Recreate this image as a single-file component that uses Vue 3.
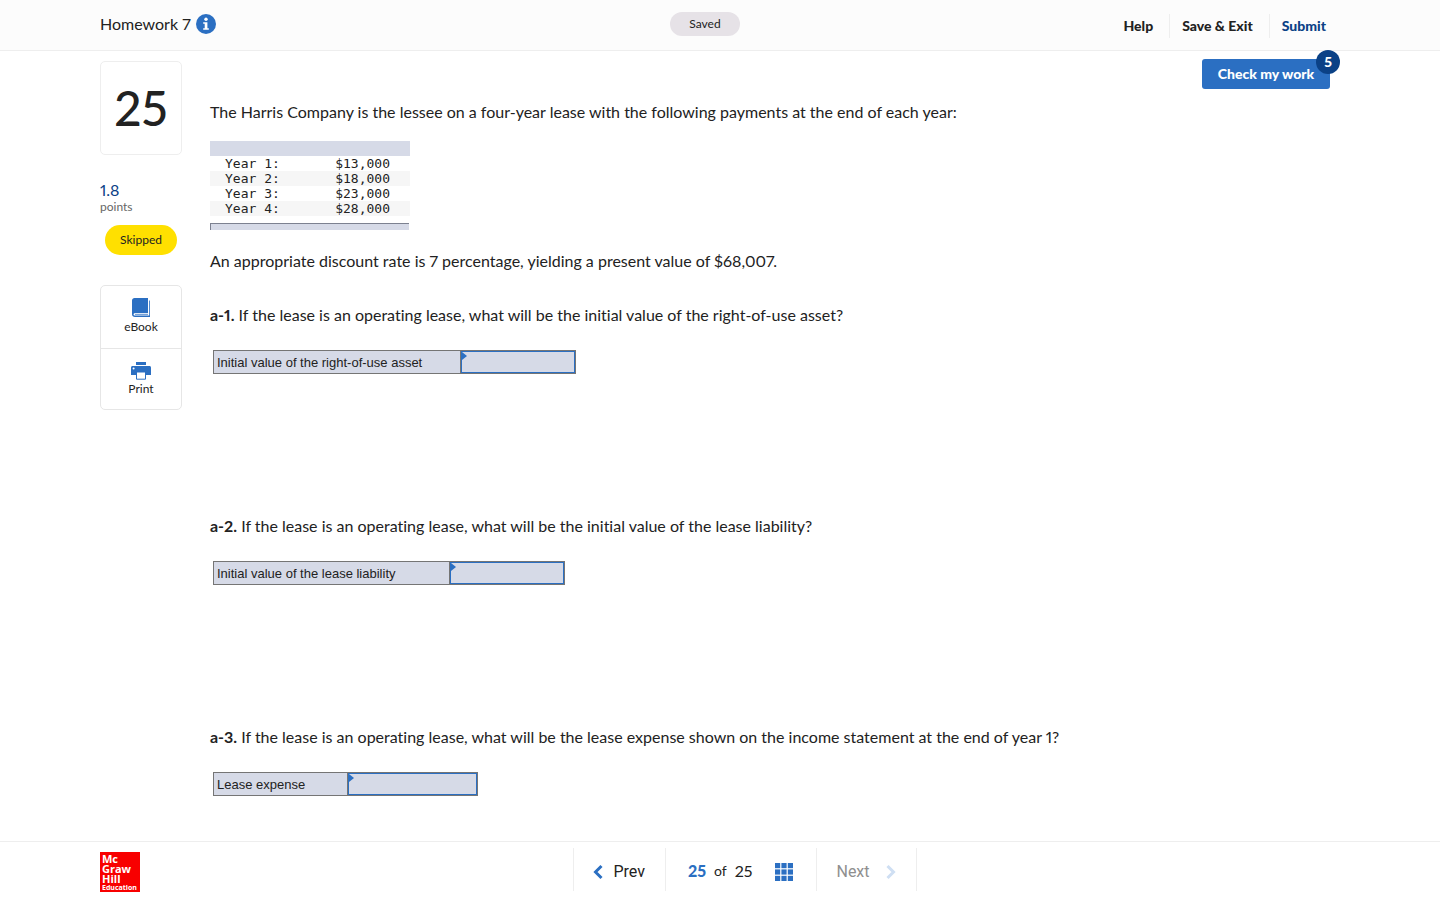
<template>
  <div class="page">
    <header class="topbar">
      <div class="title">
        <h1>Homework 7</h1>
        <button class="info-btn" aria-label="Assignment information">
          <svg width="20" height="20" viewBox="0 0 20 20">
            <circle cx="10" cy="10" r="10" fill="#2b6fc2" />
            <circle cx="10" cy="5.3" r="1.7" fill="#fff" />
            <path d="M7.2 8.2h4.2v6h1.4v1.6H7.2v-1.6h1.5V9.8H7.2z" fill="#fff" />
          </svg>
        </button>
      </div>
      <span class="saved">Saved</span>
      <nav class="top-nav">
        <a href="#">Help</a>
        <a href="#">Save &amp; Exit</a>
        <a href="#" class="submit">Submit</a>
      </nav>
    </header>

    <main class="main">
      <aside class="sidebar">
        <div class="number">{{ current }}</div>
        <div class="score">1.8</div>
        <div class="score-label">points</div>
        <span class="skipped">Skipped</span>
        <div class="tools">
          <button class="tool">
            <svg width="20" height="22" viewBox="0 0 20 22">
              <path d="M3.5 1H17v15H4.2c-1.2 0-1.6.8-1.6 1.4 0 .7.6 1.2 1.4 1.2h14.2V3.4h.8V20H4c-1.7 0-3-1.1-3-2.8V3.5C1 2.1 2.1 1 3.5 1z" fill="#2b6fc2" />
              <path d="M4 17.3h13" stroke="#2b6fc2" stroke-width="0.8" />
            </svg>
            <span>eBook</span>
          </button>
          <button class="tool">
            <svg width="20" height="22" viewBox="0 0 20 22">
              <path d="M5 3h10v3H5z" fill="#2b6fc2" />
              <path d="M1.5 7h17c.8 0 1.5.7 1.5 1.5V16H0V8.5C0 7.7.7 7 1.5 7z" fill="#2b6fc2" />
              <circle cx="2.6" cy="9.4" r="1" fill="#fff" />
              <path d="M5.5 13h9v7.2h-9z" fill="#fff" stroke="#2b6fc2" />
            </svg>
            <span>Print</span>
          </button>
        </div>
      </aside>

      <section class="content">
        <div class="actions">
          <button class="check-btn">Check my work<span class="badge">5</span></button>
        </div>
        <p>The Harris Company is the lessee on a four-year lease with the following payments at the end of each year:</p>

        <table class="payments">
          <thead>
            <tr><th colspan="2"></th></tr>
          </thead>
          <tbody>
            <tr v-for="row in payments" :key="row.year">
              <td>{{ row.year }}</td>
              <td class="amount">{{ row.amount }}</td>
            </tr>
          </tbody>
        </table>
        <div class="scrollbar"></div>

        <p class="rate">An appropriate discount rate is 7 percentage, yielding a present value of $68,007.</p>

        <div v-for="q in questions" :key="q.id" class="question">
          <p><b>{{ q.id }}.</b> {{ q.text }}</p>
          <table class="answer">
            <tbody>
              <tr>
                <th scope="row" :class="q.labelSize"><label :for="q.id">{{ q.label }}</label></th>
                <td :class="q.inputSize"><input :id="q.id" v-model="q.value" type="text"></td>
              </tr>
            </tbody>
          </table>
        </div>
      </section>
    </main>

    <footer class="footer">
      <div class="logo">
        <span>Mc</span>
        <span>Graw</span>
        <span>Hill</span>
        <span class="small">Education</span>
      </div>
      <nav class="pager">
        <button class="page-btn prev">
          <svg width="10" height="16" viewBox="0 0 10 16">
            <path d="M8.5 2l-6 6 6 6" fill="none" stroke="#2b6fc2" stroke-width="3" />
          </svg>
          Prev
        </button>
        <div class="position">
          <b>{{ current }}</b>
          <span class="of">of</span>
          <span>{{ total }}</span>
          <button class="grid-btn" aria-label="All questions">
            <svg width="18" height="18" viewBox="0 0 18 18">
              <template v-for="y in 3" :key="y">
                <rect v-for="x in 3" :key="x" :x="(x - 1) * 6.4" :y="(y - 1) * 6.4" width="5.2" height="5.2" fill="#2b6fc2" />
              </template>
            </svg>
          </button>
        </div>
        <button class="page-btn next" disabled>
          Next
          <svg width="10" height="16" viewBox="0 0 10 16">
            <path d="M1.5 2l6 6-6 6" fill="none" stroke="#cfdff3" stroke-width="3" />
          </svg>
        </button>
      </nav>
    </footer>
  </div>
</template>

<script setup>
import { ref } from 'vue';

const current = ref(25);
const total = 25;

const payments = [
  { year: 'Year 1:', amount: '$13,000' },
  { year: 'Year 2:', amount: '$18,000' },
  { year: 'Year 3:', amount: '$23,000' },
  { year: 'Year 4:', amount: '$28,000' },
];

const questions = ref([
  {
    id: 'a-1',
    text: 'If the lease is an operating lease, what will be the initial value of the right-of-use asset?',
    label: 'Initial value of the right-of-use asset',
    labelSize: 'label-lg',
    inputSize: 'input-md',
    value: '',
  },
  {
    id: 'a-2',
    text: 'If the lease is an operating lease, what will be the initial value of the lease liability?',
    label: 'Initial value of the lease liability',
    labelSize: 'label-md',
    inputSize: 'input-md',
    value: '',
  },
  {
    id: 'a-3',
    text: 'If the lease is an operating lease, what will be the lease expense shown on the income statement at the end of year 1?',
    label: 'Lease expense',
    labelSize: 'label-sm',
    inputSize: 'input-lg',
    value: '',
  },
]);
</script>

<style>
body {
  margin: 0;
  background: #fff;
}
</style>

<style scoped>
.page {
  display: flex;
  flex-direction: column;
  min-height: 100vh;
  font-family: Lato, 'Open Sans', sans-serif;
  font-size: 16px;
  font-variant-ligatures: none;
  font-variant-numeric: proportional-nums;
  line-height: 24px;
  color: #222;
}

button {
  padding: 0;
  border: none;
  background: none;
  font: inherit;
  color: inherit;
  cursor: pointer;
}

p {
  margin: 0;
}

/* header */
.topbar {
  display: grid;
  grid-template-columns: 1fr auto 1fr;
  align-items: center;
  height: 50px;
  padding: 0 114px 0 84px;
  background: #fcfcfc;
  border-bottom: 1px solid #eee;
}

.title {
  display: flex;
  align-items: center;
  gap: 5px;
  padding: 0 0 3px 16px;
}

.title h1 {
  margin: 0;
  font-size: 16px;
  font-weight: 400;
}

.info-btn {
  display: flex;
}

.saved {
  width: 70px;
  margin-bottom: 2px;
  border-radius: 12px;
  background: #e6e2e7;
  font-size: 12px;
  text-align: center;
}

.top-nav {
  display: flex;
  justify-content: flex-end;
  padding-top: 2px;
  font-size: 14px;
  font-weight: 900;
}

.top-nav a {
  padding: 0 16px 0 12px;
  color: #222;
  text-decoration: none;
}

.top-nav a + a {
  border-left: 1px solid #eee;
}

.top-nav .submit {
  padding-right: 0;
  color: #0b4186;
}

/* body */
.main {
  display: flex;
  flex: 1;
  gap: 28px;
  padding: 0 110px 0 100px;
}

.sidebar {
  width: 82px;
  padding-top: 10px;
}

.number {
  border: 1px solid #eee;
  border-radius: 5px;
  font-size: 48px;
  font-weight: 500;
  line-height: 92px;
  text-align: center;
}

.score {
  margin-top: 26px;
  line-height: 18px;
  color: #0b4186;
}

.score-label {
  font-size: 12px;
  line-height: 16px;
  color: #666;
}

.skipped {
  display: block;
  margin: 10px 5px 30px;
  border-radius: 15px;
  background: #ffe000;
  font-size: 12px;
  line-height: 30px;
  text-align: center;
}

.tools {
  border: 1px solid #e6e6e6;
  border-radius: 5px;
}

.tool {
  display: flex;
  flex-direction: column;
  align-items: center;
  width: 100%;
  height: 62px;
  padding-top: 11px;
  font-size: 12px;
  line-height: 16px;
}

.tool + .tool {
  height: 61px;
  padding-top: 10px;
  border-top: 1px solid #e6e6e6;
}

.content {
  flex: 1;
  min-width: 0;
  padding-top: 8px;
}

.actions {
  display: flex;
  justify-content: flex-end;
  margin-bottom: 11px;
}

.check-btn {
  position: relative;
  width: 128px;
  border-radius: 3px;
  background: #2b6fc2;
  color: #fff;
  font-size: 14px;
  font-weight: 900;
  line-height: 30px;
}

.badge {
  position: absolute;
  top: -9px;
  right: -10px;
  width: 24px;
  border-radius: 50%;
  background: #0b4186;
  line-height: 24px;
}

.payments {
  width: 200px;
  margin-top: 17px;
  border-collapse: collapse;
  font-family: 'DejaVu Sans Mono', monospace;
  font-size: 13px;
  line-height: 15px;
}

.payments th {
  height: 15px;
  padding: 0;
  background: #d6dae7;
}

.payments td {
  padding: 0 0 0 15px;
}

.payments .amount {
  padding: 0 20px 0 0;
  text-align: right;
}

.payments tbody tr:nth-child(even) {
  background: #f6f6f6;
}

.scrollbar {
  width: 198px;
  height: 6px;
  margin-top: 7px;
  border-top: 1px solid #7c8190;
  border-left: 1px solid #7c8190;
  background: #d6dae7;
}

.rate {
  margin: 19px 0 30px;
}

.question {
  min-height: 211px;
}

.question:last-child {
  min-height: 0;
  padding-bottom: 45px;
}

.answer {
  margin: 23px 0 0 3px;
  border-collapse: collapse;
  table-layout: fixed;
  background: #d6dae7;
  font-family: 'Liberation Sans', Arial, sans-serif;
  font-size: 13px;
  line-height: 20px;
}

.answer th,
.answer td {
  padding: 0;
  border: 1px solid #757575;
}

.answer th {
  padding: 2px 0 0 3px;
  font-weight: 400;
  text-align: left;
}

.label-lg { width: 243px; }
.label-md { width: 232px; }
.label-sm { width: 130px; }
.input-md { width: 114px; }
.input-lg { width: 129px; }

.answer td {
  position: relative;
}

.answer td::before {
  content: '';
  position: absolute;
  top: 1px;
  left: 1px;
  border-left: 5px solid #2b6fc2;
  border-top: 4px solid transparent;
  border-bottom: 4px solid transparent;
}

.answer input {
  display: block;
  box-sizing: border-box;
  width: 100%;
  height: 22px;
  padding: 0 8px;
  border: 1px solid #2b6fc2;
  background: none;
  font: inherit;
  outline: none;
}

/* footer */
.footer {
  display: grid;
  grid-template-columns: 1fr auto 1fr;
  height: 58px;
  padding: 0 50px 0 100px;
  border-top: 1px solid #eee;
}

.logo {
  display: flex;
  flex-direction: column;
  box-sizing: border-box;
  width: 40px;
  height: 40px;
  margin-top: 10px;
  padding: 2px 0 0 2px;
  background: #f80000;
  color: #fff;
  font-family: 'Open Sans', sans-serif;
  font-size: 11px;
  font-weight: 700;
  line-height: 10px;
}

.logo .small {
  font-size: 7px;
  line-height: 7px;
}

.pager {
  display: flex;
  height: 43px;
  margin-top: 6px;
  border-right: 1px solid #eee;
}

.page-btn,
.position {
  display: flex;
  align-items: center;
  border-left: 1px solid #eee;
}

.page-btn {
  gap: 10px;
  padding: 4px 20px 0 19px;
  font-family: Roboto, sans-serif;
}

.next {
  gap: 16px;
  color: #8f8f8f;
}

.position {
  gap: 8px;
  padding: 2px 23px 0 22px;
}

.position b {
  color: #2b6fc2;
  font-weight: 900;
}

.of {
  font-size: 14px;
}

.grid-btn {
  display: flex;
  margin-left: 15px;
  padding-top: 2px;
}
</style>
